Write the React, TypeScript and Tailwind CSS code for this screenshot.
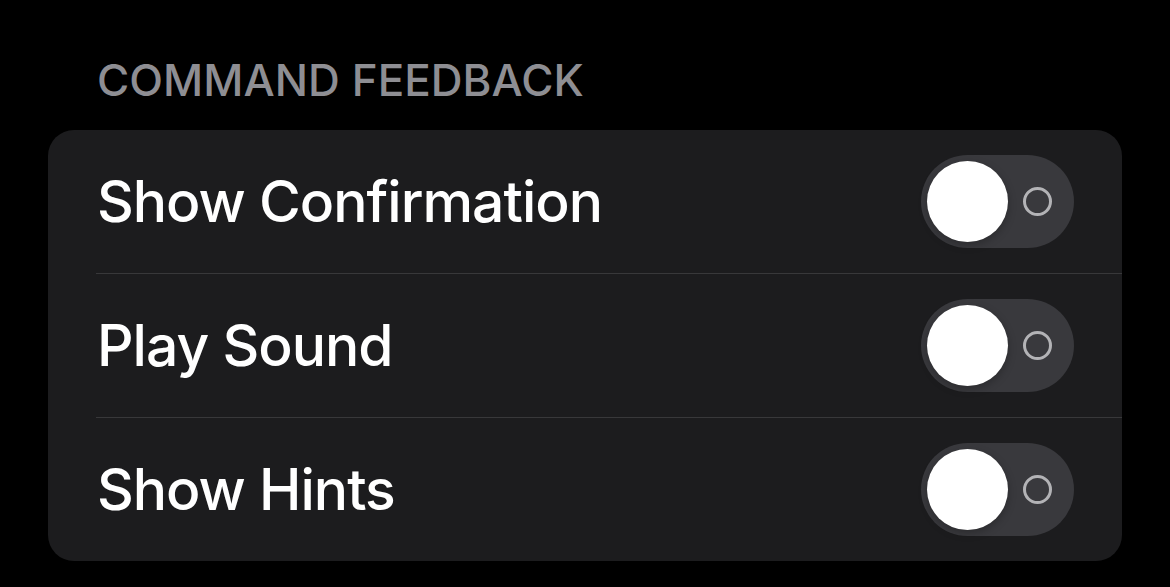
import React from "react";

function Toggle() {
  return (
    <div className="flex h-[93px] w-[153px] items-center rounded-full bg-[#39393d] pl-[6px]">
      <div className="h-[81px] w-[81px] rounded-full bg-white shadow-[0_3px_8px_rgba(0,0,0,0.25)]" />
      <div className="ml-[15px] h-[29px] w-[29px] rounded-full border-[3px] border-[#b3b3b6]" />
    </div>
  );
}

function Row({ label, last }: { label: string; last?: boolean }) {
  return (
    <div className="flex flex-col">
      <div className="flex h-[143px] items-center justify-between pl-[49px] pr-[48px]">
        <span className="text-[57px] font-medium leading-none tracking-[-1px] text-white">{label}</span>
        <Toggle />
      </div>
      {!last && <div className="ml-[48px] h-px bg-[#38383a]" />}
    </div>
  );
}

export default function App() {
  return (
    <div
      className="h-[587px] w-[1170px] bg-black pt-[58px]"
      style={{ fontFamily: "Inter, 'Noto Sans', sans-serif" }}
    >
      <div className="pl-[97px] text-[44px] font-medium leading-[44px] tracking-[0.05px] text-[#8e8e93]">COMMAND FEEDBACK</div>
      <div className="mx-[48px] mt-[28px] overflow-hidden rounded-[26px] bg-[#1c1c1e]">
        <Row label="Show Confirmation" />
        <Row label="Play Sound" />
        <Row label="Show Hints" last />
      </div>
    </div>
  );
}
